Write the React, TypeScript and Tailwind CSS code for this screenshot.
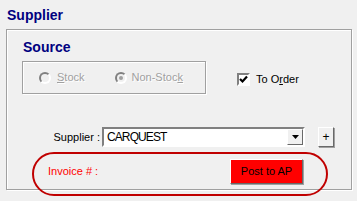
import React from 'react';

const raised = 'border border-t-white border-l-white border-r-[#696969] border-b-[#696969] shadow-[1px_1px_0_#a0a0a0]';

const App: React.FC = () => {
  return (
    <div className="relative w-[357px] h-[201px] overflow-hidden bg-[#f0f0f0] pt-[7px] font-['Liberation_Sans',Arial,sans-serif] text-[11px] leading-[13px] text-black">
      <div className="pl-[7px] text-[14px] leading-[16px] font-bold text-[#000080]">Supplier</div>

      <div className="ml-[6px] mt-[6px] w-[346px] h-[161px] border border-[#a0a0a0] shadow-[inset_1px_1px_0_#fff,1px_1px_0_#fff] pl-[15px] pt-[9px]">
        <div className="ml-[1px] text-[14px] leading-[16px] font-bold text-[#000080]">Source</div>

        {/* radio group + to order */}
        <div className="mt-[6px] flex items-start">
          <div className="w-[184px] h-[33px] border border-[#a0a0a0] shadow-[inset_1px_1px_0_#fff,1px_1px_0_#fff] flex items-center pl-[16px] text-[#a0a0a0] [text-shadow:1px_1px_0_#fff]">
            <span className="w-[12px] h-[12px] rounded-full border-2 border-t-[#808080] border-l-[#808080] border-b-white border-r-white bg-[#f0f0f0]" />
            <span className="ml-[6px]"><u>S</u>tock</span>
            <span className="ml-[30px] w-[12px] h-[12px] rounded-full border-2 border-t-[#808080] border-l-[#808080] border-b-white border-r-white bg-[#f0f0f0] flex items-center justify-center">
              <span className="w-[4px] h-[4px] rounded-full bg-[#a0a0a0]" />
            </span>
            <span className="ml-[5px]">Non-Stoc<u>k</u></span>
          </div>

          <div className="ml-[31px] mt-[12px] flex items-center">
            <span className="w-[13px] h-[13px] bg-white border-2 border-t-[#808080] border-l-[#808080] border-b-white border-r-white flex items-center justify-center">
              <svg width="9" height="9" viewBox="0 0 9 9">
                <path d="M1 4 L3.5 6.5 L8 1.5" fill="none" stroke="#000" strokeWidth="2.2" />
              </svg>
            </span>
            <span className="ml-[6px]">To O<u>r</u>der</span>
          </div>
        </div>

        {/* supplier */}
        <div className="mt-[33px] flex items-center">
          <span className="w-[78px] text-right">Supplier :</span>
          <div className="ml-[2px] w-[203px] h-[20px] bg-white border-2 border-t-[#808080] border-l-[#808080] border-b-white border-r-white flex items-center">
            <span className="pl-[3px] flex-1 text-[12px] tracking-[-0.9px]">CARQUEST</span>
            <span className={`w-[16px] h-[16px] bg-[#f0f0f0] ${raised} shadow-none flex items-center justify-center`}>
              <svg width="7" height="4" viewBox="0 0 7 4"><path d="M0 0 H7 L3.5 4 Z" fill="#000" /></svg>
            </span>
          </div>
          <span className={`ml-[13px] w-[16px] h-[20px] bg-[#f0f0f0] ${raised} flex items-center justify-center text-[12px]`}>+</span>
        </div>

        {/* invoice */}
        <div className="mt-[12px] flex items-center">
          <span className="ml-[26px] w-[182px] text-[#ff0000]">Invoice # :</span>
          <span className={`w-[73px] h-[25px] bg-[#ff0000] ${raised} flex items-center justify-center`}>Post to AP</span>
        </div>
      </div>

      {/* annotation ellipse */}
      <div className="absolute left-[32px] top-[152px] w-[296px] h-[44px] rounded-full border-2 border-[#c00000]" />
    </div>
  );
};

export default App;
